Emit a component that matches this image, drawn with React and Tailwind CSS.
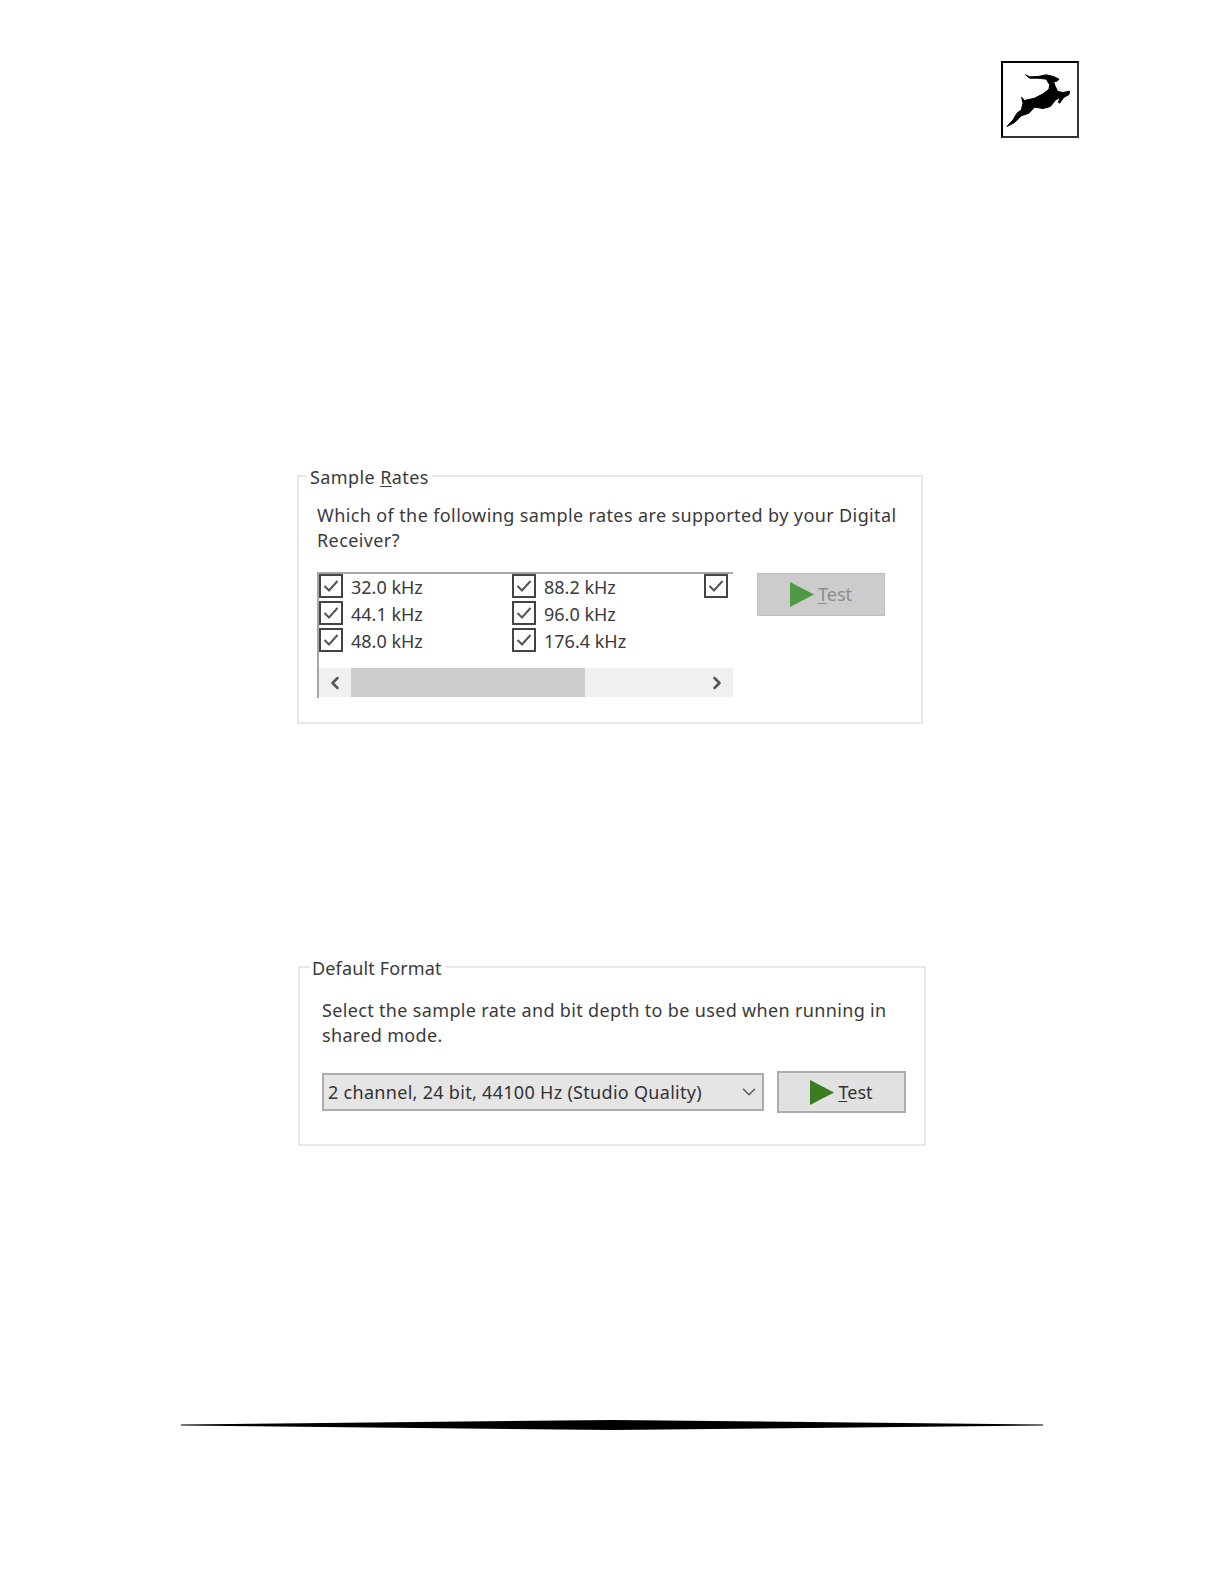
import React from 'react';
import { ChevronLeft, ChevronRight, ChevronDown } from 'lucide-react';

const fontStack = 'font-["Noto_Sans",sans-serif]';

const rates = ['32.0 kHz', '88.2 kHz', '', '44.1 kHz', '96.0 kHz', null, '48.0 kHz', '176.4 kHz', null];

const Logo = () => (
  <div className="w-[78px] h-[77px] border-2 border-black border-r-[#333] border-b-[#333]">
    <svg viewBox="70 41 222 216" className="w-full h-full block">
      <path
        fill="#000"
        stroke="#000"
        strokeWidth="3"
        strokeLinejoin="round"
        d="M138 75 L150 81 L175 80 L200 75 L222 80 L238 88 L232 94 L222 96 L226 108 L234 125 L250 128 L270 124 L268 134 L252 143 L240 160 L236 157 L242 143 L228 150 L212 170 L190 176 L165 172 L148 190 L125 198 L105 218 L82 230 L100 210 L112 190 L125 180 L130 160 L126 142 L134 152 L165 145 L190 132 L208 118 L210 105 L200 88 L175 85 L150 85 Z"
      />
    </svg>
  </div>
);

const CheckBox = () => (
  <span className="w-[24px] h-[24px] shrink-0 border-2 border-[#444] bg-white flex items-center justify-center">
    <svg viewBox="0 0 20 20" className="w-[20px] h-[20px]">
      <polyline points="3.5,10 8,14.5 16.5,5" fill="none" stroke="#555" strokeWidth="2" />
    </svg>
  </span>
);

const Triangle = ({ color }) => (
  <svg viewBox="0 0 24 25" className="w-[24px] h-[25px] shrink-0">
    <polygon points="0,0 24,12.5 0,25" fill={color} />
  </svg>
);

const App = () => {
  return (
    <div className={`w-[1224px] h-[1584px] bg-white overflow-hidden pt-[61px] text-[#3a3a3a] ${fontStack}`}>
      <div className="flex justify-end pr-[145px]">
        <Logo />
      </div>

      {/* Sample rates dialog group */}
      <fieldset className="ml-[297px] mt-[325px] w-[626px] h-[261px] border-2 border-[#e8e8e8] pl-[18px] pt-[14px]">
        <legend className="ml-[-10px] px-[3px] text-[18px] leading-[26px] tracking-[0.4px]">
          <span className="relative top-[1px]">
            Sample <span className="underline underline-offset-2">R</span>ates
          </span>
        </legend>
        <p className="text-[18px] leading-[25px] w-[595px] tracking-[0.39px]">
          Which of the following sample rates are supported by your Digital Receiver?
        </p>
        <div className="flex items-start mt-[19px]">
          <div className="w-[416px] h-[126px] border-t-2 border-l-2 border-[#a6a6a6] flex flex-col">
            <div className="grid grid-cols-[193px_192px_auto] auto-rows-[27px]">
              {rates.map((rate, idx) =>
                rate === null ? (
                  <span key={idx} />
                ) : (
                  <div key={idx} className="flex items-start gap-[8px]">
                    <CheckBox />
                    <span className="text-[18px] leading-[26px]">{rate}</span>
                  </div>
                )
              )}
            </div>
            <div className="mt-auto mb-[1px] h-[29px] bg-[#f0f0f0] flex items-center justify-between text-[#555]">
              <div className="flex items-center h-full">
                <span className="w-[32px] flex justify-center">
                  <ChevronLeft size={20} strokeWidth={3} />
                </span>
                <div className="w-[234px] h-full bg-[#cdcdcd]" />
              </div>
              <span className="w-[32px] flex justify-center">
                <ChevronRight size={20} strokeWidth={3} />
              </span>
            </div>
          </div>
          <button className="ml-[24px] mt-[1px] w-[128px] h-[43px] bg-[#cccccc] border border-[#bfbfbf] flex items-center justify-center gap-[4px] text-[18px] text-[#8c8c8c]">
            <Triangle color="#4f9a45" />
            <span>
              <span className="underline underline-offset-2">T</span>est
            </span>
          </button>
        </div>
      </fieldset>

      {/* Default format dialog group */}
      <fieldset className="ml-[298px] mt-[230px] w-[628px] h-[192px] border-2 border-[#e8e8e8] pl-[22px] pt-[18px]">
        <legend className="ml-[-13px] px-[3px] text-[18px] leading-[26px] tracking-[0.15px]">
          <span className="relative top-[1px]">Default Format</span>
        </legend>
        <p className="text-[18px] leading-[25px] w-[590px] tracking-[0.34px]">
          Select the sample rate and bit depth to be used when running in shared mode.
        </p>
        <div className="flex items-center mt-[23px]">
          <div className="w-[442px] h-[38px] bg-[#e5e5e5] border-2 border-[#adadad] flex items-center justify-between pl-[4px] pr-[2px] text-[18px] text-[#333] tracking-[0.3px]">
            <span>2 channel, 24 bit, 44100 Hz (Studio Quality)</span>
            <ChevronDown size={22} strokeWidth={1.5} className="text-[#555]" />
          </div>
          <button className="ml-[13px] w-[129px] h-[42px] bg-[#e1e1e1] border-2 border-[#adadad] flex items-center justify-center gap-[4px] text-[18px] text-[#333]">
            <Triangle color="#3a7d1f" />
            <span>
              <span className="underline underline-offset-2">T</span>est
            </span>
          </button>
        </div>
      </fieldset>

      {/* Footer rule */}
      <svg viewBox="0 0 862 10" preserveAspectRatio="none" className="block ml-[181px] mt-[274px] w-[862px] h-[10px]">
        <polygon points="0,4.5 431,0 862,4.5 862,5.5 431,10 0,5.5" fill="#000" />
      </svg>
    </div>
  );
};

export default App;
